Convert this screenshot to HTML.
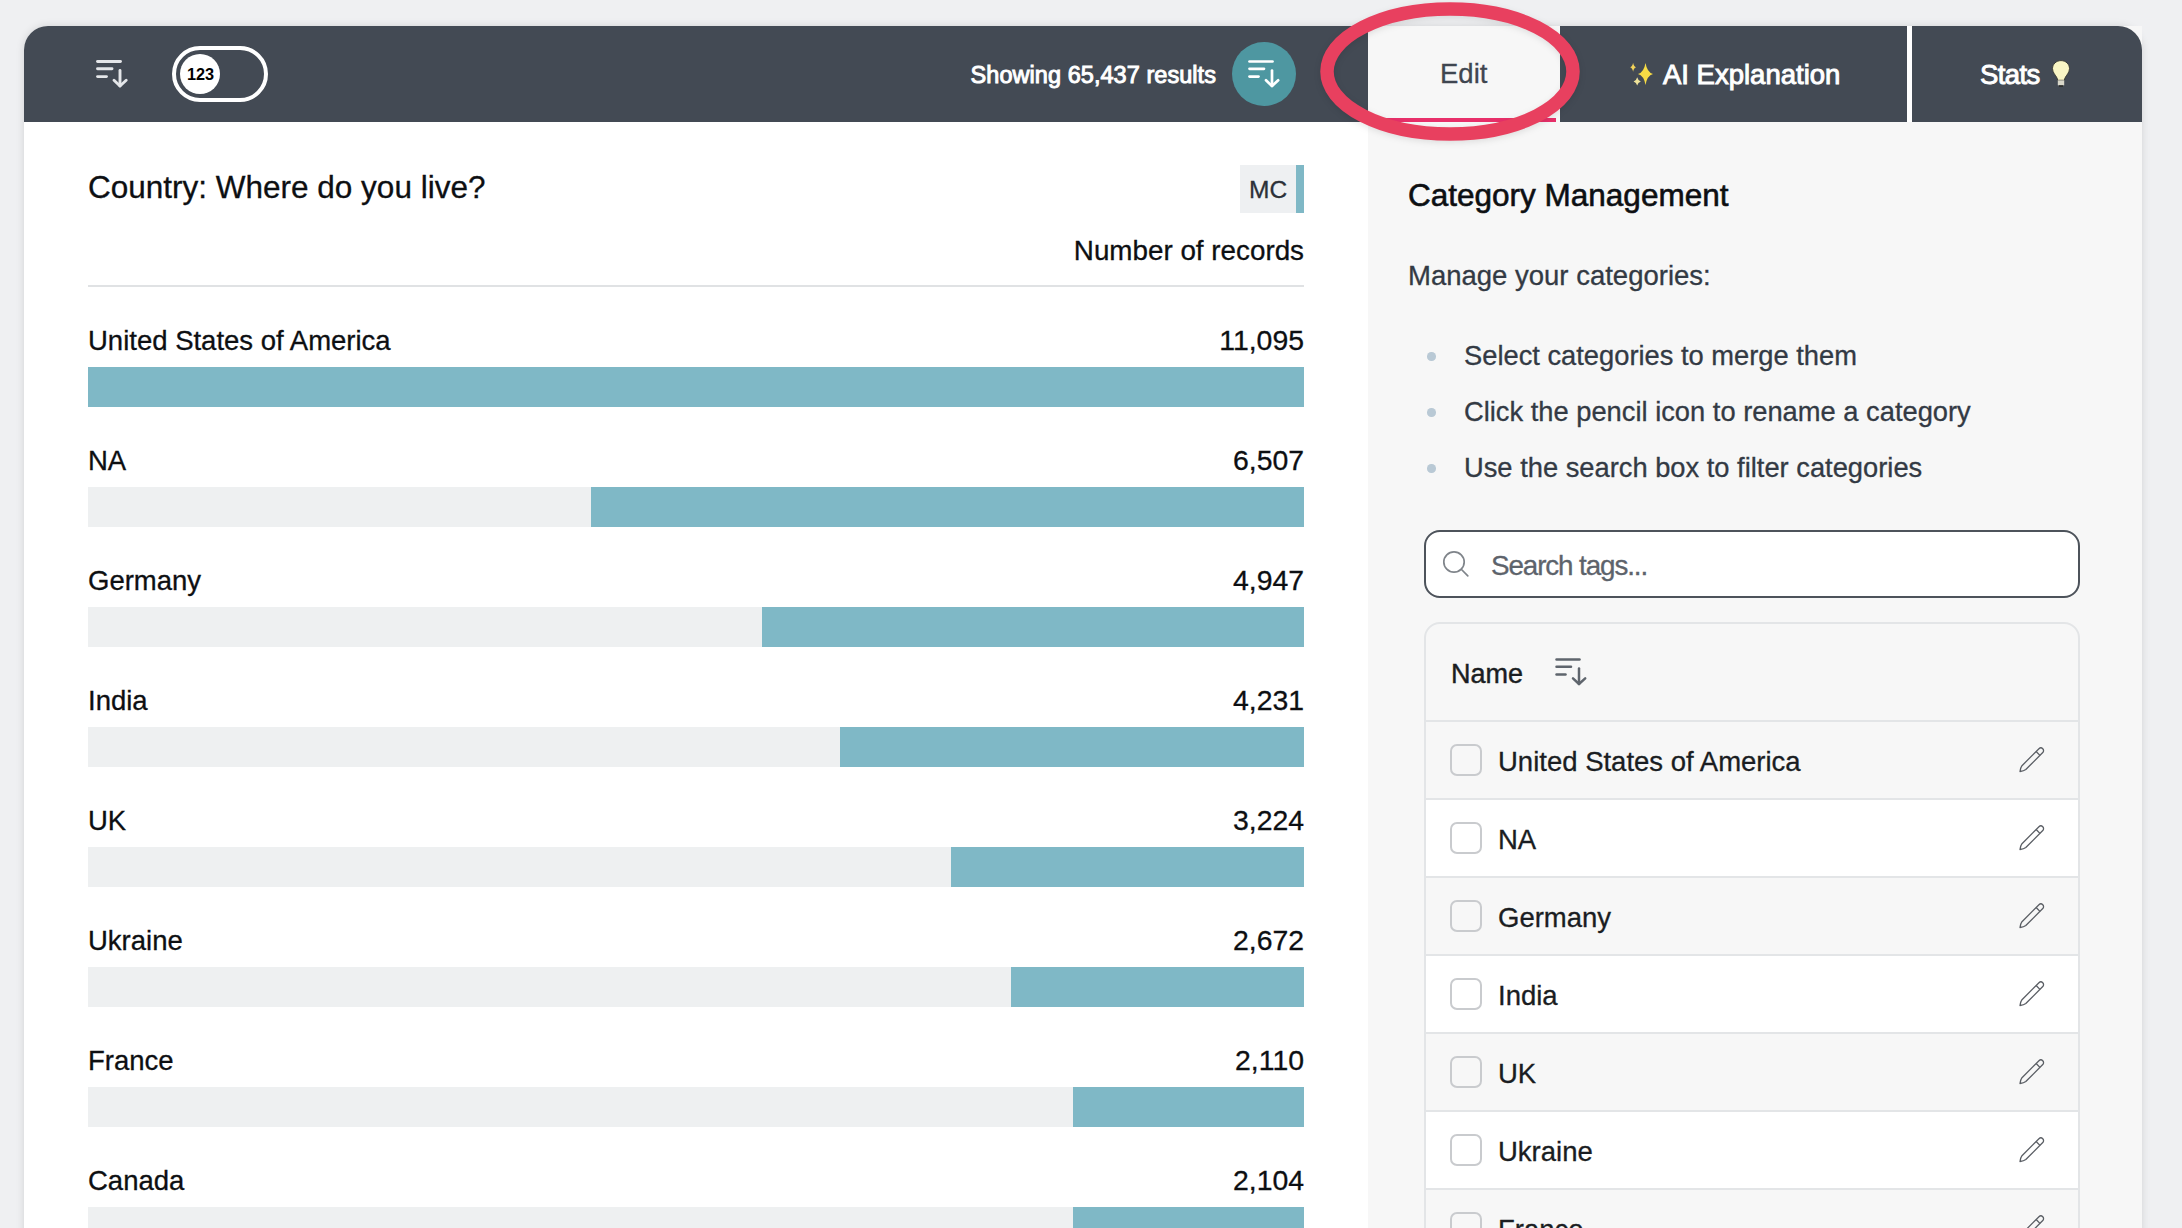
<!DOCTYPE html>
<html><head><meta charset="utf-8"><title>Category Management</title>
<style>
*{box-sizing:border-box;margin:0;padding:0}
html,body{width:2182px;height:1228px;overflow:hidden}
body{position:relative;background:#eff0f2;font-family:"Liberation Sans",sans-serif;color:#111}
.a{position:absolute;white-space:nowrap;line-height:1;-webkit-text-stroke-width:0.3px}
.card{position:absolute;left:24px;top:26px;width:2118px;height:1260px;border-radius:24px 24px 0 0;background:#fff;box-shadow:0 0 8px rgba(0,0,0,.12);overflow:hidden}
.hdr{position:absolute;left:24px;top:26px;width:2118px;height:96px;background:#434a54;border-radius:24px 24px 0 0;overflow:hidden}
.panel{position:absolute;left:1368px;top:26px;width:774px;height:1240px;background:#f7f7f7}
.bar{position:absolute;left:88px;width:1216px;height:40px;background:#eef0f1}
.bar i{position:absolute;right:0;top:0;height:40px;background:#7fb8c6}
.bul{position:absolute;left:1427px;width:8.5px;height:8.5px;border-radius:50%;background:#b9c9d5}
.row{position:absolute;left:1426px;width:652px;height:76px}
.g{background:#f7f7f7}
.w{background:#fff}
.rb{position:absolute;left:1426px;width:652px;height:2px;background:#e3e5e7}
.cb{position:absolute;left:1450px;width:32px;height:32px;border:2px solid #c9cbce;border-radius:7px}
.pen{position:absolute;left:2016px;width:32px;height:32px}
svg{position:absolute;overflow:visible}
</style></head>
<body>
<div class="card"></div>
<div class="panel"></div>
<div class="hdr"></div>
<div style="position:absolute;left:1368px;top:26px;width:192px;height:96px;background:#f7f7f7"></div>
<div style="position:absolute;left:1372px;top:118px;width:184px;height:4px;background:#e8306a"></div>
<div style="position:absolute;left:1907px;top:26px;width:5px;height:96px;background:#fff"></div>
<svg style="left:95px;top:60px" width="36.0" height="32.0" viewBox="0 0 36 32"><g stroke="#e4e6e9" stroke-width="2.9" stroke-linecap="round" fill="none" stroke-linejoin="round"><line x1="2.5" y1="1.5" x2="25.5" y2="1.5"/><line x1="2.5" y1="8.8" x2="17" y2="8.8"/><line x1="2.5" y1="16.6" x2="11.5" y2="16.6"/><line x1="25" y1="10.5" x2="25" y2="26"/><polyline points="19,20.3 25,26 31.2,20.3"/></g></svg>
<div style="position:absolute;left:172px;top:46px;width:96px;height:56px;border:4.5px solid #fff;border-radius:28px"></div>
<div style="position:absolute;left:180px;top:54px;width:40px;height:40px;border-radius:50%;background:#fff"></div>
<div class="a" style="left:187px;top:65.5px;font-size:16.3px;font-weight:700;color:#000;-webkit-text-stroke-width:0;">123</div>
<div class="a" style="right:966px;top:64px;font-size:23.5px;font-weight:400;color:#fff;letter-spacing:0.05px;-webkit-text-stroke:0.95px #fff;">Showing 65,437 results</div>
<div style="position:absolute;left:1232px;top:42px;width:64px;height:64px;border-radius:50%;background:#4e97a1"></div>
<svg style="left:1247px;top:60px" width="36.0" height="32.0" viewBox="0 0 36 32"><g stroke="#ffffff" stroke-width="2.7" stroke-linecap="round" fill="none" stroke-linejoin="round"><line x1="2.5" y1="1.5" x2="25.5" y2="1.5"/><line x1="2.5" y1="8.8" x2="17" y2="8.8"/><line x1="2.5" y1="16.6" x2="11.5" y2="16.6"/><line x1="25" y1="10.5" x2="25" y2="26"/><polyline points="19,20.3 25,26 31.2,20.3"/></g></svg>
<div class="a" style="left:1440px;top:60px;font-size:27.5px;font-weight:400;color:#3f4650;">Edit</div>
<div class="a" style="left:1663px;top:61px;font-size:27.5px;font-weight:400;color:#fff;letter-spacing:0px;-webkit-text-stroke:0.95px #fff;">AI Explanation</div>
<div class="a" style="left:1980px;top:61px;font-size:27.5px;font-weight:400;color:#fff;letter-spacing:-0.6px;-webkit-text-stroke:0.95px #fff;">Stats</div>
<svg style="left:0;top:0" width="2182" height="130"><g fill="#f7dc45"><path d="M1645.5,63 Q1647.1,72.4 1653.0,74 Q1647.1,75.6 1645.5,85 Q1643.9,75.6 1638.0,74 Q1643.9,72.4 1645.5,63 Z"/><path d="M1633.1,62.7 Q1633.8,66.5 1636.1,67.2 Q1633.8,67.9 1633.1,71.7 Q1632.3999999999999,67.9 1630.1,67.2 Q1632.3999999999999,66.5 1633.1,62.7 Z" fill="#f2d35a"/><path d="M1637.2,77.2 Q1638.0,80.60000000000001 1640.8,81.4 Q1638.0,82.2 1637.2,85.60000000000001 Q1636.4,82.2 1633.6000000000001,81.4 Q1636.4,80.60000000000001 1637.2,77.2 Z" fill="#efe39a"/></g><g><path d="M2061,60.6 C2066,60.6 2069.5,64.3 2069.5,68.6 C2069.5,72.5 2066.5,75 2065,78 L2064.3,80.3 L2057.7,80.3 L2057,78 C2055.5,75 2052.5,72.5 2052.5,68.6 C2052.5,64.3 2056,60.6 2061,60.6 Z" fill="#faf6c4" stroke="#3e3f36" stroke-width="1"/><rect x="2057.8" y="80.3" width="6.4" height="5" fill="#d9d7c9"/><rect x="2059" y="85.3" width="4" height="1.6" fill="#2d2e2a"/></g></svg>
<div class="a" style="left:88px;top:172px;font-size:31.5px;font-weight:400;color:#0d0f12;">Country: Where do you live?</div>
<div style="position:absolute;left:1240px;top:165px;width:64px;height:48px;background:#eef0f2"></div>
<div style="position:absolute;left:1296px;top:165px;width:8px;height:48px;background:#7fb8c6"></div>
<div class="a" style="left:1249px;top:178px;font-size:24.5px;font-weight:400;color:#2c3138;">MC</div>
<div class="a" style="right:878px;top:237px;font-size:27.8px;font-weight:400;color:#0d0f12;">Number of records</div>
<div style="position:absolute;left:88px;top:285px;width:1216px;height:2px;background:#e0e2e4"></div>
<div class="a" style="left:88px;top:327px;font-size:27.5px;font-weight:400;color:#0d0f12;">United States of America</div>
<div class="a" style="right:878px;top:326px;font-size:28.4px;font-weight:400;color:#0d0f12;">11,095</div>
<div class="bar" style="top:367px"><i style="width:1216.0px"></i></div>
<div class="a" style="left:88px;top:447px;font-size:27.5px;font-weight:400;color:#0d0f12;">NA</div>
<div class="a" style="right:878px;top:446px;font-size:28.4px;font-weight:400;color:#0d0f12;">6,507</div>
<div class="bar" style="top:487px"><i style="width:713.2px"></i></div>
<div class="a" style="left:88px;top:567px;font-size:27.5px;font-weight:400;color:#0d0f12;">Germany</div>
<div class="a" style="right:878px;top:566px;font-size:28.4px;font-weight:400;color:#0d0f12;">4,947</div>
<div class="bar" style="top:607px"><i style="width:542.2px"></i></div>
<div class="a" style="left:88px;top:687px;font-size:27.5px;font-weight:400;color:#0d0f12;">India</div>
<div class="a" style="right:878px;top:686px;font-size:28.4px;font-weight:400;color:#0d0f12;">4,231</div>
<div class="bar" style="top:727px"><i style="width:463.7px"></i></div>
<div class="a" style="left:88px;top:807px;font-size:27.5px;font-weight:400;color:#0d0f12;">UK</div>
<div class="a" style="right:878px;top:806px;font-size:28.4px;font-weight:400;color:#0d0f12;">3,224</div>
<div class="bar" style="top:847px"><i style="width:353.3px"></i></div>
<div class="a" style="left:88px;top:927px;font-size:27.5px;font-weight:400;color:#0d0f12;">Ukraine</div>
<div class="a" style="right:878px;top:926px;font-size:28.4px;font-weight:400;color:#0d0f12;">2,672</div>
<div class="bar" style="top:967px"><i style="width:292.8px"></i></div>
<div class="a" style="left:88px;top:1047px;font-size:27.5px;font-weight:400;color:#0d0f12;">France</div>
<div class="a" style="right:878px;top:1046px;font-size:28.4px;font-weight:400;color:#0d0f12;">2,110</div>
<div class="bar" style="top:1087px"><i style="width:231.3px"></i></div>
<div class="a" style="left:88px;top:1167px;font-size:27.5px;font-weight:400;color:#0d0f12;">Canada</div>
<div class="a" style="right:878px;top:1166px;font-size:28.4px;font-weight:400;color:#0d0f12;">2,104</div>
<div class="bar" style="top:1207px"><i style="width:230.6px"></i></div>
<div class="a" style="left:1408px;top:180px;font-size:31.5px;font-weight:400;color:#0d0f12;-webkit-text-stroke:0.6px #0d0f12;">Category Management</div>
<div class="a" style="left:1408px;top:262px;font-size:27.5px;font-weight:400;color:#333a44;">Manage your categories:</div>
<div class="bul" style="top:352px"></div>
<div class="a" style="left:1464px;top:342px;font-size:27.3px;font-weight:400;color:#333a44;">Select categories to merge them</div>
<div class="bul" style="top:408px"></div>
<div class="a" style="left:1464px;top:398px;font-size:27.3px;font-weight:400;color:#333a44;">Click the pencil icon to rename a category</div>
<div class="bul" style="top:464px"></div>
<div class="a" style="left:1464px;top:454px;font-size:27.3px;font-weight:400;color:#333a44;">Use the search box to filter categories</div>
<div style="position:absolute;left:1424px;top:530px;width:656px;height:68px;border:2px solid #4d535b;border-radius:16px;background:#fff"></div>
<svg style="left:1440px;top:548px" width="32" height="32" viewBox="0 0 32 32"><circle cx="14" cy="14" r="10.2" stroke="#7f848a" stroke-width="1.7" fill="none"/><line x1="21.5" y1="21.5" x2="27.8" y2="27.8" stroke="#7f848a" stroke-width="1.7" stroke-linecap="round"/></svg>
<div class="a" style="left:1491px;top:552px;font-size:27.8px;font-weight:400;color:#5d636b;letter-spacing:-1.1px;">Search tags...</div>
<div style="position:absolute;left:1424px;top:622px;width:656px;height:700px;border:2px solid #e3e5e7;border-radius:16px;background:#f7f7f7"></div>
<div class="a" style="left:1451px;top:661px;font-size:27px;font-weight:400;color:#1a1d22;-webkit-text-stroke:0.45px #1a1d22;">Name</div>
<svg style="left:1554px;top:658px" width="36.0" height="32.0" viewBox="0 0 36 32"><g stroke="#5f656d" stroke-width="2.5" stroke-linecap="round" fill="none" stroke-linejoin="round"><line x1="2.5" y1="1.5" x2="25.5" y2="1.5"/><line x1="2.5" y1="8.8" x2="17" y2="8.8"/><line x1="2.5" y1="16.6" x2="11.5" y2="16.6"/><line x1="25" y1="10.5" x2="25" y2="26"/><polyline points="19,20.3 25,26 31.2,20.3"/></g></svg>
<div class="rb" style="top:720px"></div>
<div class="row g" style="top:722px"></div>
<div class="rb" style="top:798px"></div>
<div class="cb" style="top:744px"></div>
<div class="a" style="left:1498px;top:748px;font-size:27.5px;font-weight:400;color:#1a1d22;">United States of America</div>
<svg class="pen" style="top:744px" width="32" height="32" viewBox="0 0 32 32"><g fill="none" stroke="#5a5e64" stroke-width="1.3" stroke-linejoin="round"><path d="M4,27.5 Q4.6,23.5 5.98,21.70 L22.95,4.73 A2.7,2.7 0 0 1 26.77,8.55 L9.80,25.52 Q7.9,27 4,27.5 Z"/><line x1="20.12" y1="7.56" x2="23.94" y2="11.38"/></g></svg>
<div class="row w" style="top:800px"></div>
<div class="rb" style="top:876px"></div>
<div class="cb" style="top:822px"></div>
<div class="a" style="left:1498px;top:826px;font-size:27.5px;font-weight:400;color:#1a1d22;">NA</div>
<svg class="pen" style="top:822px" width="32" height="32" viewBox="0 0 32 32"><g fill="none" stroke="#5a5e64" stroke-width="1.3" stroke-linejoin="round"><path d="M4,27.5 Q4.6,23.5 5.98,21.70 L22.95,4.73 A2.7,2.7 0 0 1 26.77,8.55 L9.80,25.52 Q7.9,27 4,27.5 Z"/><line x1="20.12" y1="7.56" x2="23.94" y2="11.38"/></g></svg>
<div class="row g" style="top:878px"></div>
<div class="rb" style="top:954px"></div>
<div class="cb" style="top:900px"></div>
<div class="a" style="left:1498px;top:904px;font-size:27.5px;font-weight:400;color:#1a1d22;">Germany</div>
<svg class="pen" style="top:900px" width="32" height="32" viewBox="0 0 32 32"><g fill="none" stroke="#5a5e64" stroke-width="1.3" stroke-linejoin="round"><path d="M4,27.5 Q4.6,23.5 5.98,21.70 L22.95,4.73 A2.7,2.7 0 0 1 26.77,8.55 L9.80,25.52 Q7.9,27 4,27.5 Z"/><line x1="20.12" y1="7.56" x2="23.94" y2="11.38"/></g></svg>
<div class="row w" style="top:956px"></div>
<div class="rb" style="top:1032px"></div>
<div class="cb" style="top:978px"></div>
<div class="a" style="left:1498px;top:982px;font-size:27.5px;font-weight:400;color:#1a1d22;">India</div>
<svg class="pen" style="top:978px" width="32" height="32" viewBox="0 0 32 32"><g fill="none" stroke="#5a5e64" stroke-width="1.3" stroke-linejoin="round"><path d="M4,27.5 Q4.6,23.5 5.98,21.70 L22.95,4.73 A2.7,2.7 0 0 1 26.77,8.55 L9.80,25.52 Q7.9,27 4,27.5 Z"/><line x1="20.12" y1="7.56" x2="23.94" y2="11.38"/></g></svg>
<div class="row g" style="top:1034px"></div>
<div class="rb" style="top:1110px"></div>
<div class="cb" style="top:1056px"></div>
<div class="a" style="left:1498px;top:1060px;font-size:27.5px;font-weight:400;color:#1a1d22;">UK</div>
<svg class="pen" style="top:1056px" width="32" height="32" viewBox="0 0 32 32"><g fill="none" stroke="#5a5e64" stroke-width="1.3" stroke-linejoin="round"><path d="M4,27.5 Q4.6,23.5 5.98,21.70 L22.95,4.73 A2.7,2.7 0 0 1 26.77,8.55 L9.80,25.52 Q7.9,27 4,27.5 Z"/><line x1="20.12" y1="7.56" x2="23.94" y2="11.38"/></g></svg>
<div class="row w" style="top:1112px"></div>
<div class="rb" style="top:1188px"></div>
<div class="cb" style="top:1134px"></div>
<div class="a" style="left:1498px;top:1138px;font-size:27.5px;font-weight:400;color:#1a1d22;">Ukraine</div>
<svg class="pen" style="top:1134px" width="32" height="32" viewBox="0 0 32 32"><g fill="none" stroke="#5a5e64" stroke-width="1.3" stroke-linejoin="round"><path d="M4,27.5 Q4.6,23.5 5.98,21.70 L22.95,4.73 A2.7,2.7 0 0 1 26.77,8.55 L9.80,25.52 Q7.9,27 4,27.5 Z"/><line x1="20.12" y1="7.56" x2="23.94" y2="11.38"/></g></svg>
<div class="row g" style="top:1190px"></div>
<div class="rb" style="top:1266px"></div>
<div class="cb" style="top:1212px"></div>
<div class="a" style="left:1498px;top:1216px;font-size:27.5px;font-weight:400;color:#1a1d22;">France</div>
<svg class="pen" style="top:1212px" width="32" height="32" viewBox="0 0 32 32"><g fill="none" stroke="#5a5e64" stroke-width="1.3" stroke-linejoin="round"><path d="M4,27.5 Q4.6,23.5 5.98,21.70 L22.95,4.73 A2.7,2.7 0 0 1 26.77,8.55 L9.80,25.52 Q7.9,27 4,27.5 Z"/><line x1="20.12" y1="7.56" x2="23.94" y2="11.38"/></g></svg>
<svg style="left:0;top:0;filter:drop-shadow(0 2px 3px rgba(0,0,0,.10))" width="2182" height="200" viewBox="0 0 2182 200"><ellipse cx="1450" cy="71.5" rx="123" ry="62.5" fill="none" stroke="#e8405f" stroke-width="13.5"/></svg>
</body></html>
